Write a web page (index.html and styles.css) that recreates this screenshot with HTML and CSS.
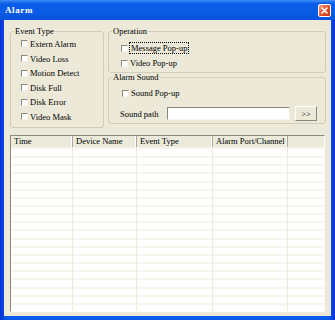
FILE: index.html
```html
<!DOCTYPE html>
<html lang="en">
<head>
    <meta charset="utf-8">
    <title>Alarm</title>
    <link rel="stylesheet" href="styles.css">
</head>
<body>
    <div class="window">
        <div class="titlebar">
            <span class="title">Alarm</span>
            <span class="close">
                <svg width="7" height="7" viewBox="0 0 7 7">
                    <path d="M1 1L6 6M6 1L1 6" stroke="#fff" stroke-width="1.6" stroke-linecap="round"/>
                </svg>
            </span>
        </div>

        <div class="client">
            <div class="top">
                <fieldset class="group events">
                    <legend>Event Type</legend>
                    <div class="items">
                        <label class="check"><span class="box"></span>Extern Alarm</label>
                        <label class="check"><span class="box"></span>Video Loss</label>
                        <label class="check"><span class="box"></span>Motion Detect</label>
                        <label class="check"><span class="box"></span>Disk Full</label>
                        <label class="check"><span class="box"></span>Disk Error</label>
                        <label class="check"><span class="box"></span>Video Mask</label>
                    </div>
                </fieldset>

                <div class="right">
                    <fieldset class="group operation">
                        <legend>Operation</legend>
                        <div class="items">
                            <label class="check"><span class="box"></span><span class="focus">Message Pop-up</span></label>
                            <label class="check"><span class="box"></span>Video Pop-up</label>
                        </div>
                    </fieldset>

                    <fieldset class="group sound">
                        <legend>Alarm Sound</legend>
                        <div class="items">
                            <label class="check"><span class="box"></span>Sound Pop-up</label>
                            <div class="path">
                                <span class="path-label">Sound path</span>
                                <span class="input"></span>
                                <span class="btn">&gt;&gt;</span>
                            </div>
                        </div>
                    </fieldset>
                </div>
            </div>

            <div class="list">
                <div class="head">
                    <span class="col c1">Time</span>
                    <span class="col c2">Device Name</span>
                    <span class="col c3">Event Type</span>
                    <span class="col c4">Alarm Port/Channel</span>
                    <span class="col c5"></span>
                </div>
                <div class="rows">
                    <span class="col c1"></span>
                    <span class="col c2"></span>
                    <span class="col c3"></span>
                    <span class="col c4"></span>
                    <span class="col c5"></span>
                </div>
            </div>
        </div>
    </div>
</body>
</html>
```

FILE: styles.css
```css
body {
    margin: 0;
    font-family: "Liberation Serif", serif;
    font-size: 8.5px;
    color: #000;
}
.window {
    width: 335px;
    height: 320px;
    background: linear-gradient(to right, #0831d9, #0b5ce6 2%, #0b5ce6 98%, #0831d9);
    display: flex;
    flex-direction: column;
}
.titlebar {
    height: 20px;
    flex: none;
    display: flex;
    align-items: center;
    justify-content: space-between;
    padding: 0 4px 0 5px;
    background: linear-gradient(to bottom, #3f8ff6, #0a5de8 18%, #0a5ae4 70%, #0a52dc);
}
.title {
    color: #fff;
    font-weight: bold;
    font-size: 9px;
    letter-spacing: 0.6px;
}
.close {
    width: 13px;
    height: 13px;
    box-sizing: border-box;
    border: 1px solid #fff;
    border-radius: 2px;
    background: linear-gradient(135deg, #f0a183, #e0552b 50%, #c63a12);
    display: flex;
    align-items: center;
    justify-content: center;
}
.client {
    flex: 1;
    margin: 0 4px 4px;
    background: #ece9d8;
    padding: 7px 5px 4px 6px;
    display: flex;
    flex-direction: column;
}
.top {
    display: flex;
    align-items: flex-start;
    gap: 4px;
}
fieldset {
    margin: 0;
    padding: 0;
    border: 1px solid #d0cdbd;
    border-radius: 3px;
    box-sizing: border-box;
    min-width: 0;
}
legend {
    padding: 0 1px;
    margin-left: 3px;
    line-height: 8px;
}
.events {
    width: 94px;
    height: 101px;
}
.events .items {
    padding: 1.7px 0 0 10px;
}
.events .check {
    height: 14.6px;
}
.right {
    flex: 1;
    display: flex;
    flex-direction: column;
}
.operation {
    height: 46px;
}
.operation .items {
    padding: 5.5px 0 0 12px;
}
.sound {
    height: 51px;
}
.sound .items {
    padding: 4.5px 0 0 13px;
}
.check {
    display: flex;
    align-items: center;
    height: 15px;
}
.box {
    width: 7px;
    height: 7px;
    box-sizing: border-box;
    border: 1px solid;
    border-color: #8a897e #f4f3ee #f4f3ee #8a897e;
    background: #fff;
    margin-right: 2px;
}
.focus {
    outline: 1px dotted #000;
    outline-offset: 0;
    padding: 0 1px;
}
.path {
    display: flex;
    align-items: center;
    height: 15px;
    margin: 5.5px 0 0 -2px;
}
.path-label {
    width: 47px;
}
.input {
    width: 123px;
    height: 13px;
    box-sizing: border-box;
    border: 1px solid;
    border-color: #8a897e #f4f3ee #f4f3ee #8a897e;
    background: #fff;
}
.btn {
    width: 22px;
    height: 15px;
    box-sizing: border-box;
    margin-left: 5px;
    border: 1px solid;
    border-color: #fff #8a897e #8a897e #fff;
    background: #ece9d8;
    display: flex;
    align-items: center;
    justify-content: center;
}
.list {
    flex: 1;
    margin: 7px 1px 0 0;
    border: 1px solid;
    border-color: #8a897e #fff #fff #8a897e;
    background: #fff;
    display: flex;
    flex-direction: column;
}
.head,
.rows {
    display: flex;
}
.head {
    height: 11px;
    background: #ebeadb;
}
.head .col {
    box-sizing: border-box;
    padding-left: 3px;
    line-height: 11px;
    border-right: 1px solid #aca899;
    box-shadow: inset -1px 0 0 #fff;
}
.head .c5 {
    border-right: none;
    box-shadow: none;
}
.rows {
    flex: 1;
    background: repeating-linear-gradient(to bottom, transparent 0 7.15px, #efe9dc 7.15px 8.15px);
    background-position: 0 2.5px;
}
.rows .col {
    box-sizing: border-box;
    border-right: 1px solid #efe9dc;
}
.rows .c5 {
    border-right: none;
}
.c1 { width: 62px; }
.c2 { width: 64px; }
.c3 { width: 76px; }
.c4 { width: 75px; }
.c5 { flex: 1; }
```
